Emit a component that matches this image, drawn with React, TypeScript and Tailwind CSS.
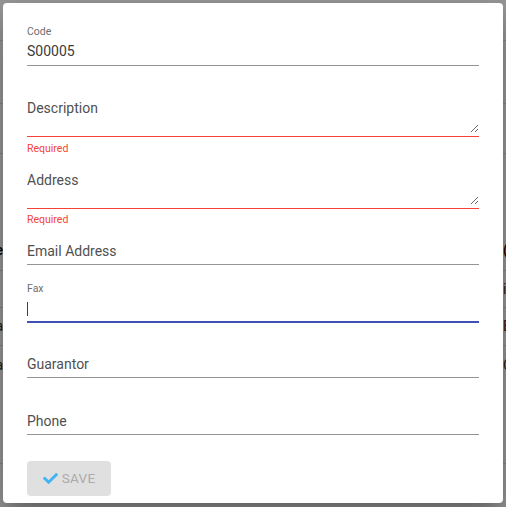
import React from "react";
import { FaCheck } from "react-icons/fa";

const font = { fontFamily: "Roboto, 'Liberation Sans', sans-serif" };

// page behind the modal: a table, mostly hidden by the dialog
const rows = [
  { h: "h-[41px]", left: "", right: "", border: true },
  { h: "h-[63px]", left: "", right: "", border: true },
  { h: "h-[50px]", left: "", right: "", border: true },
  { h: "h-[76px]", left: "", right: "", border: false },
  { h: "h-[41px]", left: "Name", right: "(", border: true, head: true },
  { h: "h-[37px]", left: "", right: "i", border: true },
  { h: "h-[38px]", left: "Sea", right: "E", border: true },
  { h: "h-[38px]", left: "Pla", right: "C", border: false },
  { h: "h-[80px]", left: "", right: "", border: true },
];

function BackgroundTable() {
  return (
    <div className="flex flex-col bg-white">
      {rows.map((r, i) => (
        <div
          key={i}
          className={`${r.h} flex items-center justify-between ${
            r.border ? "border-b border-[#e0e0e0]" : ""
          } ${r.head ? "font-medium text-black" : "text-[#333]"} text-[14px]`}
        >
          <div className="w-[3px] flex justify-end whitespace-nowrap">
            {r.left}
          </div>
          <div className="w-[3px] flex justify-start whitespace-nowrap">
            {r.right}
          </div>
        </div>
      ))}
    </div>
  );
}

function SmallLabel({ children }: { children: React.ReactNode }) {
  return (
    <div className="text-[10.5px] leading-[14px] text-[#6e6e6e]">{children}</div>
  );
}

function Required({ className }: { className: string }) {
  return (
    <div className={`${className} text-[10.5px] leading-[14px] text-[#f44336]`}>
      Required
    </div>
  );
}

function PlainField({ label, className }: { label: string; className: string }) {
  return (
    <div className={`${className} border-b border-[#949494] pb-[3px]`}>
      <div className="text-[14px] leading-[19px] text-[#505050]">{label}</div>
    </div>
  );
}

function AreaField({
  label,
  className,
  h,
}: {
  label: string;
  className: string;
  h: string;
}) {
  return (
    <div className={`${className} border-b border-[#f44336] pb-[3px] flex`}>
      <textarea
        placeholder={label}
        className={`w-full ${h} text-[14px] leading-[19px] text-[#3a3a3a] placeholder:text-[#505050] outline-none resize-y`}
        style={font}
      />
    </div>
  );
}

export default function App() {
  return (
    <div className="relative h-screen w-screen overflow-hidden" style={font}>
      <BackgroundTable />

      {/* modal */}
      <div className="absolute inset-0 bg-black/40 flex items-start justify-center pt-[3px]">
        <div className="w-[500px] h-[500px] bg-white rounded-[4px] shadow-[0px_11px_15px_-7px_rgba(0,0,0,0.2),0px_24px_38px_3px_rgba(0,0,0,0.14),0px_9px_46px_8px_rgba(0,0,0,0.12)] px-6 pt-[22px] flex flex-col">
          {/* Code */}
          <div className="border-b border-[#949494] pb-1">
            <SmallLabel>Code</SmallLabel>
            <div className="mt-[3px] text-[14px] leading-[19px] text-[#3a3a3a]">
              S00005
            </div>
          </div>

          <AreaField label="Description" className="mt-[33px]" h="h-[34px]" />
          <Required className="mt-[5px]" />

          <AreaField label="Address" className="mt-[15px]" h="h-[34px]" />
          <Required className="mt-[4px]" />

          <PlainField label="Email Address" className="mt-[15px]" />

          {/* Fax, focused */}
          <div className="mt-[17px] border-b-2 border-[#3f51b5] pb-[3px]">
            <SmallLabel>Fax</SmallLabel>
            <div className="mt-[3px] h-[19px] flex items-start pt-[3px]">
              <div className="w-px h-[14px] bg-[#2f3a7a]" />
            </div>
          </div>

          <PlainField label="Guarantor" className="mt-[32px]" />
          <PlainField label="Phone" className="mt-[34px]" />

          <div className="mt-[26px]">
            <button
              disabled
              className="w-[84px] h-[35px] rounded-[4px] bg-[#e0e0e0] flex items-center justify-center gap-[4px] text-[13.5px] font-normal tracking-[0.3px] text-[#ababab] uppercase"
            >
              <FaCheck className="text-[#42b4f4] w-[15px] h-[15px]" />
              <span>Save</span>
            </button>
          </div>
        </div>
      </div>
    </div>
  );
}
